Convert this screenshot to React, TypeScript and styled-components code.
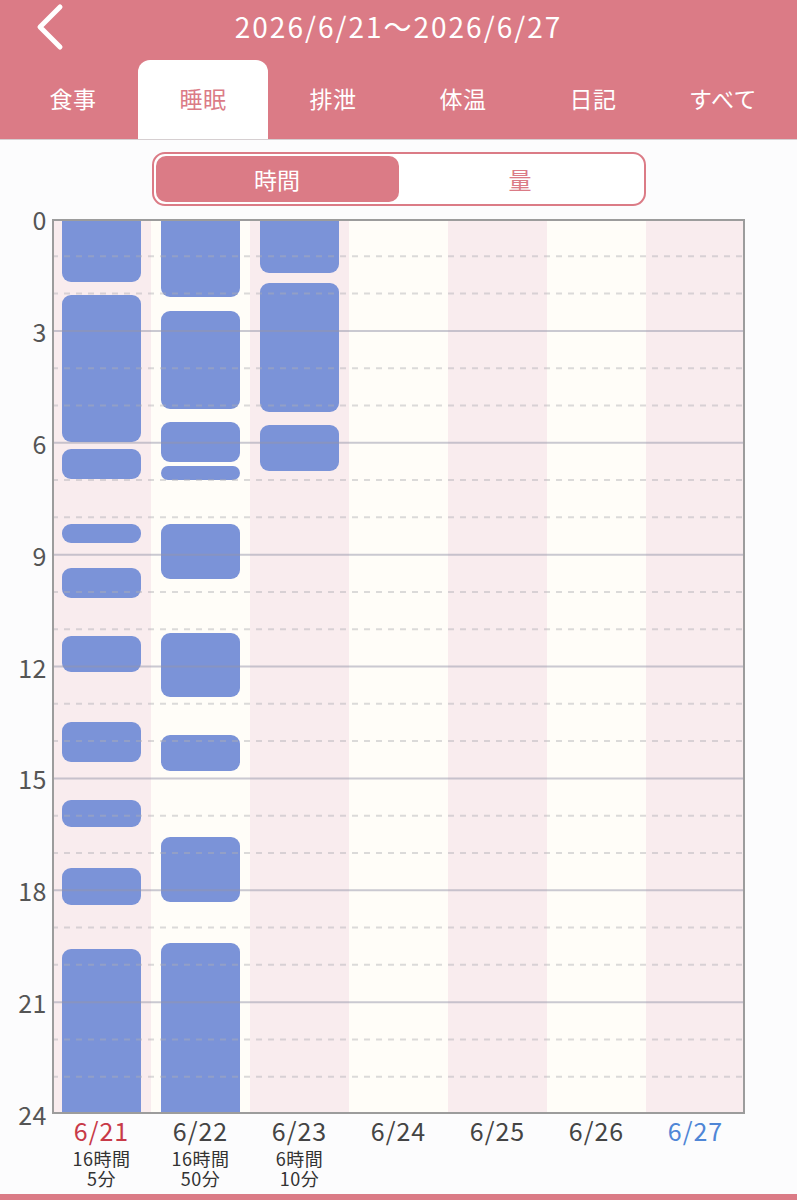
import React from "react";
import styled, { createGlobalStyle } from "styled-components";

const PINK = "#db7b86";
const BAR = "#7b93d8";
const HOUR_PX = 895 / 24;

const GlobalStyle = createGlobalStyle`
  html, body {
    margin: 0;
    padding: 0;
    background: #fcfcfd;
    font-family: "Noto Sans CJK JP", "Noto Sans", sans-serif;
  }
`;

const Page = styled.div`
  width: 797px;
  height: 1200px;
  display: flex;
  flex-direction: column;
  overflow: hidden;
`;

const Header = styled.header`
  background: ${PINK};
  border-bottom: 1px solid #d6cfd1;
`;

const TitleRow = styled.div`
  height: 60px;
  display: grid;
  grid-template-columns: 1fr auto 1fr;
  align-items: center;
  padding-bottom: 13px;
  box-sizing: border-box;
`;

const BackButton = styled.button`
  width: 40px;
  height: 50px;
  margin-left: 30px;
  margin-top: 2px;
  padding: 0;
  border: none;
  background: none;
  display: flex;
  align-items: center;
  justify-content: center;
`;

const Title = styled.h1`
  margin: 0;
  font-size: 28px;
  font-weight: 400;
  color: #fff;
  letter-spacing: 2px;
`;

const Tabs = styled.nav`
  display: flex;
  padding: 0 8px;
  height: 79px;
`;

const Tab = styled.div<{ $active?: boolean }>`
  width: 130px;
  display: flex;
  align-items: center;
  justify-content: center;
  font-size: 23px;
  letter-spacing: 0.5px;
  color: ${({ $active }) => ($active ? PINK : "#fff")};
  background: ${({ $active }) => ($active ? "#fff" : "transparent")};
  border-radius: 12px 12px 0 0;
  padding-bottom: 3px;
  box-sizing: border-box;
`;

const Segment = styled.div`
  align-self: center;
  margin-top: 12px;
  width: 494px;
  height: 54px;
  box-sizing: border-box;
  border: 2px solid ${PINK};
  border-radius: 13px;
  padding: 2px;
  display: flex;
  background: #fff;
`;

const SegmentItem = styled.div<{ $active?: boolean }>`
  flex: 1;
  display: flex;
  align-items: center;
  justify-content: center;
  font-size: 23px;
  border-radius: 10px;
  color: ${({ $active }) => ($active ? "#fff" : PINK)};
  background: ${({ $active }) => ($active ? PINK : "transparent")};
`;

const Chart = styled.section`
  margin-top: 13px;
  display: grid;
  grid-template-columns: 52px 693px;
`;

const Axis = styled.div`
  height: 895px;
  display: flex;
  flex-direction: column;
  justify-content: space-between;
`;

const AxisLabel = styled.div`
  height: 0;
  display: flex;
  align-items: center;
  justify-content: flex-end;
  padding-right: 5px;
  font-size: 25px;
  letter-spacing: 0.5px;
  color: #555;
`;

const Plot = styled.div`
  position: relative;
  height: 895px;
  display: grid;
  grid-template-columns: repeat(7, 99px);
  overflow: hidden;
`;

const DayColumn = styled.div<{ $shade: boolean }>`
  position: relative;
  background: ${({ $shade }) => ($shade ? "#f9ecee" : "#fffdf8")};
`;

const SleepBar = styled.div`
  position: absolute;
  left: 10px;
  right: 10px;
  background: ${BAR};
  border-radius: 9px;
`;

const GridOverlay = styled.svg`
  position: absolute;
  inset: 0;
  pointer-events: none;
`;

const DateRow = styled.div`
  display: grid;
  grid-template-columns: repeat(7, 99px);
  margin-left: 52px;
`;

const DateCell = styled.div`
  display: flex;
  flex-direction: column;
  align-items: center;
`;

const DateText = styled.div<{ $tone: "sun" | "sat" | "week" }>`
  font-size: 25px;
  line-height: 32px;
  letter-spacing: 1px;
  color: ${({ $tone }) => ($tone === "sun" ? "#c83a48" : $tone === "sat" ? "#4f86d6" : "#444")};
`;

const Total = styled.div`
  margin-top: 2px;
  font-size: 18px;
  line-height: 20px;
  letter-spacing: 0.5px;
  color: #333;
  text-align: center;
`;

const BottomBar = styled.div`
  margin-top: auto;
  height: 6px;
  background: ${PINK};
`;

type Day = {
  label: string;
  tone: "sun" | "sat" | "week";
  total?: [string, string];
  sleeps: [number, number][];
};

const days: Day[] = [
  {
    label: "6/21",
    tone: "sun",
    total: ["16時間", "5分"],
    sleeps: [
      [0, 1.69], [2.04, 5.98], [6.17, 6.98], [8.18, 8.69], [9.36, 10.16],
      [11.18, 12.15], [13.49, 14.56], [15.58, 16.31], [17.4, 18.4], [19.58, 24],
    ],
  },
  {
    label: "6/22",
    tone: "week",
    total: ["16時間", "50分"],
    sleeps: [
      [0, 2.09], [2.47, 5.09], [5.44, 6.52], [6.63, 7.0], [8.18, 9.65],
      [11.1, 12.82], [13.84, 14.8], [16.57, 18.32], [19.41, 24],
    ],
  },
  {
    label: "6/23",
    tone: "week",
    total: ["6時間", "10分"],
    sleeps: [[0, 1.45], [1.72, 5.18], [5.53, 6.76]],
  },
  { label: "6/24", tone: "week", sleeps: [] },
  { label: "6/25", tone: "week", sleeps: [] },
  { label: "6/26", tone: "week", sleeps: [] },
  { label: "6/27", tone: "sat", sleeps: [] },
];

const tabs = ["食事", "睡眠", "排泄", "体温", "日記", "すべて"];
const ticks = [0, 3, 6, 9, 12, 15, 18, 21, 24];

const GridLines: React.FC = () => {
  const hours = Array.from({ length: 23 }, (_, i) => i + 1);
  return (
    <GridOverlay viewBox="0 0 693 895" width={693} height={895}>
      {hours.map((h) => {
        const y = h * HOUR_PX;
        return h % 3 === 0 ? (
          <line key={h} x1={0} x2={693} y1={y} y2={y} stroke="rgba(150,150,170,0.5)" strokeWidth={2} />
        ) : (
          <line
            key={h}
            x1={0}
            x2={693}
            y1={y}
            y2={y}
            stroke="rgba(175,175,180,0.45)"
            strokeWidth={2}
            strokeDasharray="6 6"
          />
        );
      })}
      <path d="M1 895 V1 H692 V894 H1" fill="none" stroke="#9c9c9c" strokeWidth={2} />
    </GridOverlay>
  );
};

export default function App() {
  return (
    <Page>
      <GlobalStyle />
      <Header>
        <TitleRow>
          <BackButton aria-label="back">
            <svg width="30" height="48" viewBox="0 0 30 48">
              <path d="M25 4 L5 24 L25 44" fill="none" stroke="#fff" strokeWidth="5" strokeLinecap="round" strokeLinejoin="round" />
            </svg>
          </BackButton>
          <Title>2026/6/21〜2026/6/27</Title>
          <span />
        </TitleRow>
        <Tabs>
          {tabs.map((t) => (
            <Tab key={t} $active={t === "睡眠"}>
              {t}
            </Tab>
          ))}
        </Tabs>
      </Header>

      <Segment>
        <SegmentItem $active>時間</SegmentItem>
        <SegmentItem>量</SegmentItem>
      </Segment>

      <Chart>
        <Axis>
          {ticks.map((t) => (
            <AxisLabel key={t}>{t}</AxisLabel>
          ))}
        </Axis>
        <Plot>
          {days.map((d, i) => (
            <DayColumn key={d.label} $shade={i % 2 === 0}>
              {d.sleeps.map(([from, to], j) => {
                // bars touching the edges run past the frame so their ends look cut off
                const top = from === 0 ? -12 : from * HOUR_PX;
                const bottom = to === 24 ? 895 + 12 : to * HOUR_PX;
                return <SleepBar key={j} style={{ top, height: bottom - top }} />;
              })}
            </DayColumn>
          ))}
          <GridLines />
        </Plot>
      </Chart>

      <DateRow>
        {days.map((d) => (
          <DateCell key={d.label}>
            <DateText $tone={d.tone}>{d.label}</DateText>
            {d.total && (
              <Total>
                {d.total[0]}
                <br />
                {d.total[1]}
              </Total>
            )}
          </DateCell>
        ))}
      </DateRow>

      <BottomBar />
    </Page>
  );
}
